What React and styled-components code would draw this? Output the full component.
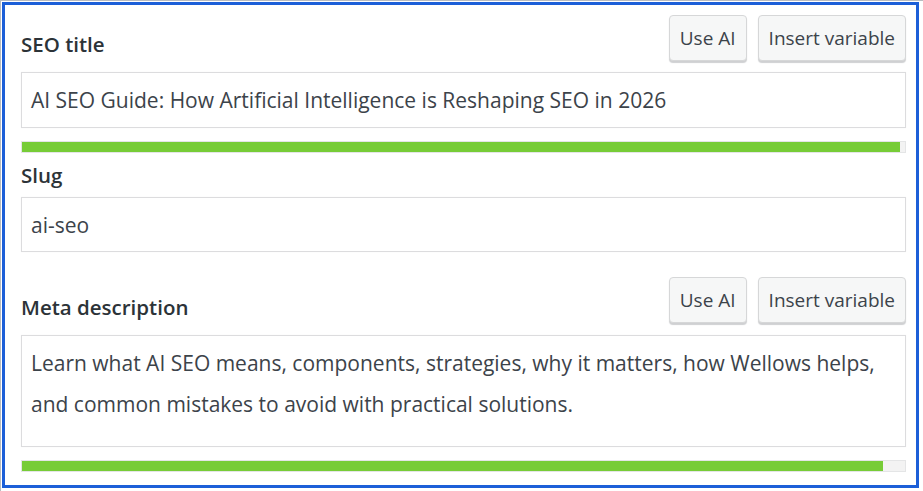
import styled, { createGlobalStyle } from "styled-components";

const GlobalStyle = createGlobalStyle`
  html, body {
    margin: 0;
    padding: 0;
    background: #ffffff;
  }
  body {
    font-family: "Open Sans", "Noto Sans", sans-serif;
    color: #3c434a;
  }
`;

const Canvas = styled.div`
  width: 923px;
  height: 491px;
  box-sizing: border-box;
  border-top: 1px solid #b9bcc0;
  border-left: 1px solid #b9bcc0;
  padding: 1px 0 0 1px;
`;

const Frame = styled.div`
  width: 917px;
  height: 486px;
  box-sizing: border-box;
  border: 3px solid #1c5fd8;
  padding: 10px 10px 0 16px;
  display: flex;
  flex-direction: column;
`;

const Header = styled.div`
  display: flex;
  align-items: flex-end;
  justify-content: space-between;
  height: 48px;
  margin-top: ${(props) => props.top || "0px"};
`;

const Label = styled.label`
  display: block;
  font-size: 20.5px;
  font-weight: 600;
  color: #2c3338;
  line-height: 26px;
  padding-bottom: ${(props) => props.pb || "0px"};
  margin-top: ${(props) => props.top || "0px"};
`;

const Actions = styled.div`
  display: flex;
  gap: 11px;
  align-self: flex-start;
`;

const Button = styled.button`
  font-family: "Open Sans", "Noto Sans", sans-serif;
  font-size: 19px;
  color: #3c434a;
  background: #f6f7f7;
  border: 1px solid #d6d7d8;
  border-radius: 4px;
  box-shadow: 0 2px 1px #cfd0d2;
  height: 46px;
  padding: 0 10px;
  cursor: pointer;
`;

const Input = styled.div`
  box-sizing: border-box;
  height: ${(props) => props.h || "56px"};
  margin-top: ${(props) => props.top || "0px"};
  border: 1px solid #dcdcde;
  box-shadow: 0 0 1px rgba(0, 0, 0, 0.05);
  background: #fff;
  padding: ${(props) => props.pad || "0 9px"};
  display: flex;
  align-items: ${(props) => (props.multi ? "flex-start" : "center")};
  font-size: 21px;
  line-height: ${(props) => (props.multi ? "41px" : "26px")};
  color: #3c434a;
`;

const Bar = styled.div`
  box-sizing: border-box;
  height: 12px;
  margin-top: ${(props) => props.top || "0px"};
  border: 1px solid #e4e5e6;
  background: #f3f3f3;
`;

const Fill = styled.div`
  height: 100%;
  background: #77cc37;
`;

export default function App() {
  return (
    <>
      <GlobalStyle />
      <Canvas>
        <Frame>
          <Header>
            <Label pb="6px">SEO title</Label>
            <Actions>
              <Button>Use AI</Button>
              <Button>Insert variable</Button>
            </Actions>
          </Header>
          <Input top="9px">
            AI SEO Guide: How Artificial Intelligence is Reshaping SEO in 2026
          </Input>
          <Bar top="13px">
            <Fill style={{ width: "99.4%" }} />
          </Bar>
          <Label top="9px">Slug</Label>
          <Input top="9px" h="55px">
            ai-seo
          </Input>
          <Header top="25px">
            <Label pb="5px">Meta description</Label>
            <Actions>
              <Button>Use AI</Button>
              <Button>Insert variable</Button>
            </Actions>
          </Header>
          <Input top="10px" h="112px" multi pad="7px 9px 0">
            Learn what AI SEO means, components, strategies, why it matters, how
            Wellows helps, and common mistakes to avoid with practical solutions.
          </Input>
          <Bar top="13px">
            <Fill style={{ width: "97.5%" }} />
          </Bar>
        </Frame>
      </Canvas>
    </>
  );
}
